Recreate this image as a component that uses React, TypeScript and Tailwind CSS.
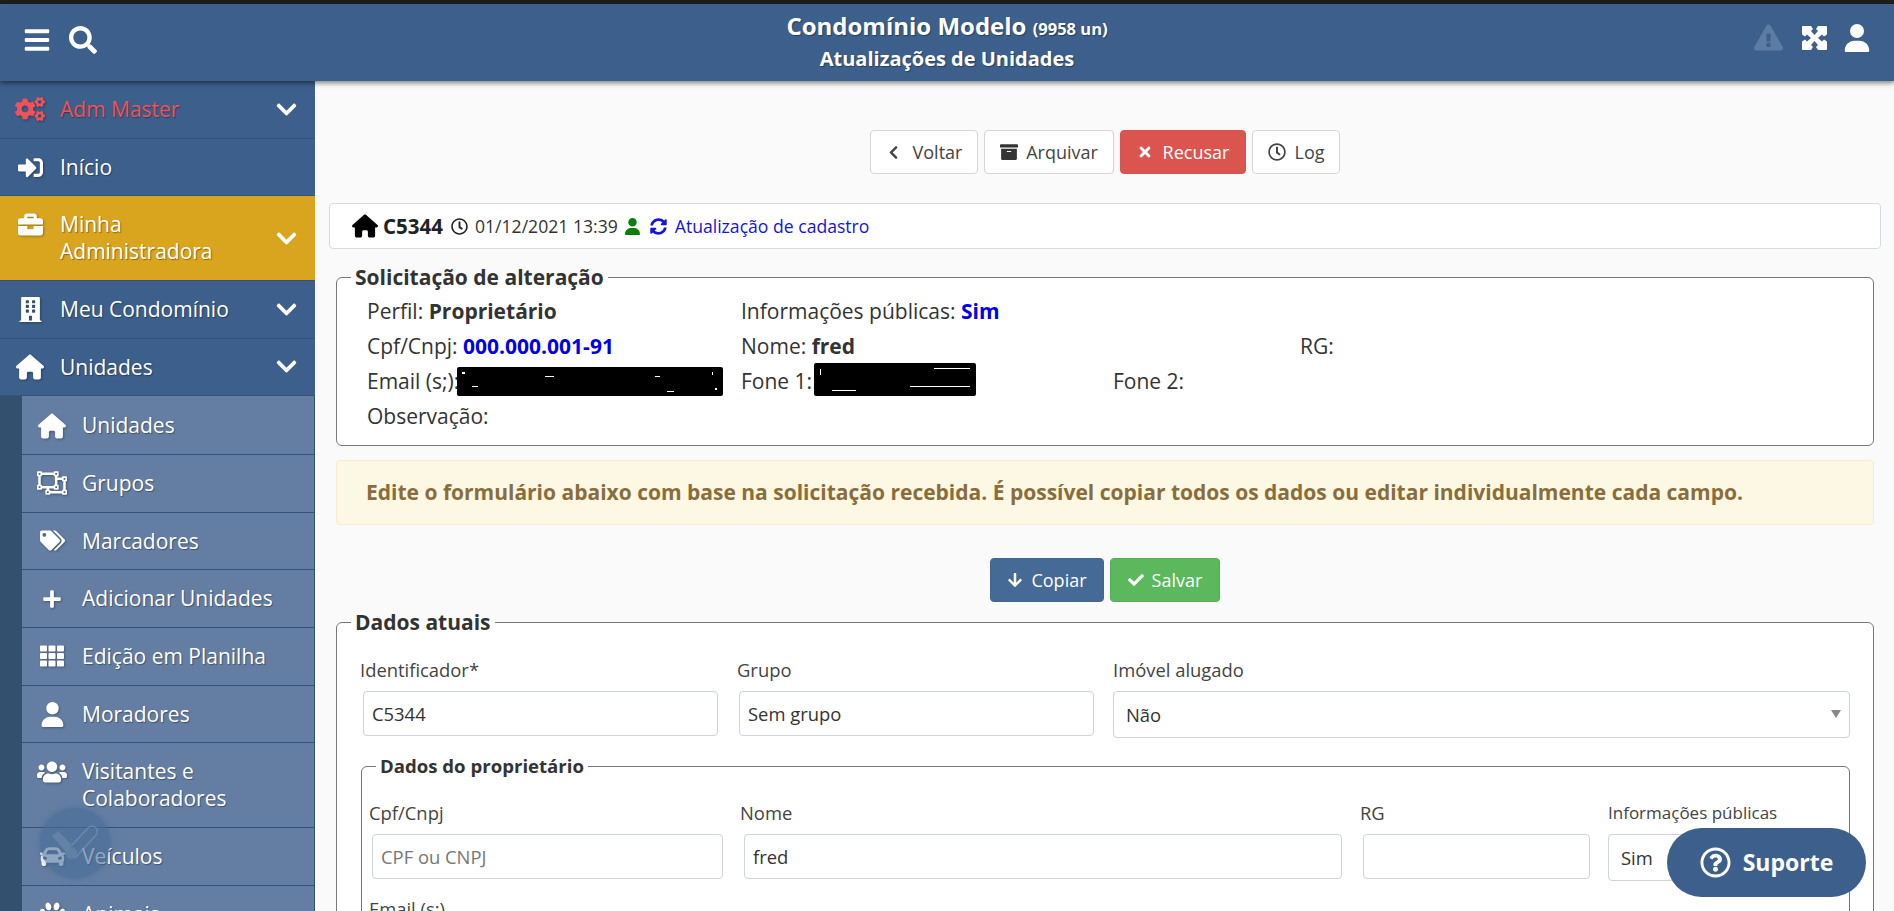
import React from "react";
import {
  FaArchive, FaArrowDown, FaBars, FaBriefcase, FaBuilding, FaCar, FaCheck, FaChevronDown, FaChevronLeft,
  FaCogs, FaExclamationTriangle, FaPaw, FaPlus, FaRegClock,
  FaRegObjectUngroup, FaRegQuestionCircle, FaSearch, FaSignInAlt, FaSyncAlt, FaTags, FaTh, FaTimes, FaUsers,
} from "react-icons/fa";
import { FaHouse, FaUser } from "react-icons/fa6";

const shadow = "[text-shadow:1px_1px_1px_rgba(0,0,0,0.35)]";
const iconBox = "flex h-[26.7px] w-[30px] shrink-0 items-center justify-center [filter:drop-shadow(1px_1px_1px_rgba(0,0,0,0.3))]";

type NavProps = {
  icon: React.ReactNode;
  label: React.ReactNode;
  chevron?: boolean;
  className?: string;
};

const NavItem = ({ icon, label, chevron, className }: NavProps) => (
  <div className={`flex items-start border-b border-[#34537c] py-[15px] pl-[15px] pr-[17px] ${className ?? ""}`}>
    <span className={iconBox}>{icon}</span>
    <span className={`ml-[15px] flex-1 ${shadow}`}>{label}</span>
    {chevron && <FaChevronDown className="my-auto shrink-0 text-[23px] text-white" />}
  </div>
);

const SubItem = ({ icon, label }: { icon: React.ReactNode; label: React.ReactNode }) => (
  <div className="flex items-start border-b border-[#34537c] py-[15px] pl-[15px]">
    <span className={iconBox}>{icon}</span>
    <span className={`ml-[15px] flex-1 ${shadow}`}>{label}</span>
  </div>
);

const Sidebar = () => (
  <aside className="relative w-[315px] shrink-0 overflow-hidden bg-[#3d5f8b] text-[21px] leading-[26.7px] text-white">
    <NavItem icon={<FaCogs className="text-[30px] text-[#f0525a]" />} label={<span className="text-[#f0525a]">Adm Master</span>} chevron />
    <NavItem icon={<FaSignInAlt className="text-[25px]" />} label="Início" />
    <NavItem icon={<FaBriefcase className="text-[25px]" />} label={<>Minha<br />Administradora</>} chevron className="bg-[#d9a51e]" />
    <NavItem icon={<FaBuilding className="text-[25px]" />} label="Meu Condomínio" chevron />
    <NavItem icon={<FaHouse className="text-[28px]" />} label="Unidades" chevron />
    <div className="bg-[#33506f] pl-[22px]">
      <div className="mr-px bg-[#647ea3] pt-px">
        <SubItem icon={<FaHouse className="text-[28px]" />} label="Unidades" />
        <SubItem icon={<FaRegObjectUngroup className="text-[30px]" />} label="Grupos" />
        <SubItem icon={<FaTags className="text-[25px]" />} label="Marcadores" />
        <SubItem icon={<FaPlus className="text-[20px]" />} label="Adicionar Unidades" />
        <SubItem icon={<FaTh className="text-[24px]" />} label="Edição em Planilha" />
        <SubItem icon={<FaUser className="text-[25px]" />} label="Moradores" />
        <SubItem icon={<FaUsers className="text-[30px]" />} label={<>Visitantes e<br />Colaboradores</>} />
        <SubItem icon={<FaCar className="text-[25px]" />} label="Veículos" />
        <SubItem icon={<FaPaw className="text-[25px]" />} label="Animais" />
      </div>
    </div>
    {/* bolinha flutuante do chat */}
    <div className="absolute left-[40px] top-[727px] h-[70px] w-[70px] rounded-full bg-[#466c97]/60 shadow-[0_0_6px_rgba(60,95,140,0.5)]">
      <svg viewBox="0 0 70 70" className="h-[70px] w-[70px]" fill="none">
        <path d="M12 28l6-5 14 14-6 7z" fill="#8ea5c0" opacity="0.3" />
        <path d="M32 37l16-17a5 5 0 0 1 8 7L35 50" stroke="#8ea5c0" strokeWidth="1.5" opacity="0.45" />
        <circle cx="31" cy="45" r="6" fill="#6f8aab" opacity="0.55" />
      </svg>
    </div>
  </aside>
);

const Btn = ({ children, className }: { children: React.ReactNode; className?: string }) => (
  <button className={`flex h-[44px] items-center justify-center gap-[8px] rounded-[4px] border text-[18px] ${className ?? ""}`}>
    {children}
  </button>
);

const Legend = ({ children, small }: { children: React.ReactNode; small?: boolean }) => (
  <legend className={`ml-[14px] px-[4px] font-bold leading-[26px] text-[#333] ${small ? "text-[18.6px]" : "text-[21px]"}`}>
    {children}
  </legend>
);

const inputBase = "block h-[45px] rounded-[4px] border border-[#ced4da] bg-white px-[8px] text-[18.4px] text-[#333] outline-none placeholder:text-[#777]";

type FieldProps = { label: string; value?: string; placeholder?: string; inputClass: string };

const Field = ({ label, value, placeholder, inputClass }: FieldProps) => (
  <div>
    <label className="mb-[9px] block text-[18.4px] leading-[24px] text-[#444]">{label}</label>
    <input readOnly value={value ?? ""} placeholder={placeholder} className={`${inputBase} ${inputClass}`} />
  </div>
);

const SelectField = ({ label, value, className, labelClass }: { label: string; value: string; className: string; labelClass?: string }) => (
  <div>
    <label className={`mb-[9px] block leading-[24px] text-[#444] ${labelClass ?? "text-[18.4px]"}`}>{label}</label>
    <div className={`relative ${className}`}>
      <select defaultValue={value} className={`${inputBase} h-[47px] w-full appearance-none pl-[12px]`}>
        <option>{value}</option>
      </select>
      <span className="absolute right-[9px] top-[19px] h-0 w-0 border-x-[5px] border-t-[8px] border-x-transparent border-t-[#888]" />
    </div>
  </div>
);

// marcas brancas que sobraram da tarja preta
const Speck = ({ className }: { className: string }) => <i className={`absolute bg-white ${className}`} />;

const ExpandIcon = () => (
  <svg viewBox="0 0 25 24" className="h-[24px] w-[25px]">
    <rect width="25" height="24" rx="1" fill="#fff" />
    <g fill="#3d5f8b">
      <path d="M9 0h7l-2 3 2 2-3.500 4L9 5l2-2z" />
      <path d="M9 24h7l-2-3 2-2-3.500-4L9 19l2 2z" />
      <path d="M0 8.500v7l3-2 2 2 4-3.500-4-3.500-2 2z" />
      <path d="M25 8.500v7l-3-2-2 2-4-3.500 4-3.500 2 2z" />
    </g>
  </svg>
);

const Main = () => (
  <main className="min-w-0 flex-1 overflow-hidden bg-[#fafafa] pl-[14px] pr-[13px] pt-[49px] text-[17.6px] text-[#333]">
    <div className="flex justify-center gap-[6px]">
      <Btn className="w-[108px] gap-[12px] border-[#d5d5d5] bg-white text-[#444]"><FaChevronLeft className="text-[15px]" />Voltar</Btn>
      <Btn className="w-[130px] border-[#d5d5d5] bg-white text-[#444]"><FaArchive className="text-[18px] text-[#333]" />Arquivar</Btn>
      <Btn className="w-[126px] gap-[10px] border-[#d9534f] bg-[#dc5450] text-white"><FaTimes className="text-[16px]" />Recusar</Btn>
      <Btn className="w-[88px] gap-[9px] border-[#d5d5d5] bg-white text-[#444]"><FaRegClock className="text-[18px]" />Log</Btn>
    </div>

    <div className="mt-[29px] flex h-[46px] items-center rounded-[4px] border border-[#d5dbe3] bg-white pl-[22px]">
      <FaHouse className="text-[26px] text-black" />
      <span className="ml-[5px] text-[20.5px] font-bold text-[#222]">C5344</span>
      <FaRegClock className="ml-[8px] text-[17px] text-[#222]" />
      <span className="ml-[7px]">01/12/2021 13:39</span>
      <FaUser className="ml-[6px] text-[17px] text-[#0a7f0a]" />
      <FaSyncAlt className="ml-[9px] text-[17px] text-[#1414e0]" />
      <span className="ml-[8px] text-[#1414e0]">Atualização de cadastro</span>
    </div>

    <fieldset className="mx-[7px] mt-[15px] rounded-[6px] border border-[#777] bg-white pb-[12px] pt-[3px]">
      <Legend>Solicitação de alteração</Legend>
      <div className="grid auto-rows-[35px] grid-cols-[374px_372px_187px_1fr] items-center pl-[30px] text-[21px] leading-[28px]">
        <div>Perfil: <b>Proprietário</b></div>
        <div className="col-span-3">Informações públicas: <b className="text-[#0000e6]">Sim</b></div>
        <div>Cpf/Cnpj: <b className="text-[#0000e6]">000.000.001-91</b></div>
        <div className="col-span-2">Nome: <b>fred</b></div>
        <div>RG:</div>
        <div className="relative">
          Email (s;):
          <span className="absolute left-[90px] top-[0px] h-[29px] w-[266px] rounded-[2px] bg-black">
            <Speck className="left-[5px] top-[5px] h-[2px] w-[3px]" />
            <Speck className="left-[15px] top-[19px] h-px w-[6px]" />
            <Speck className="left-[88px] top-[9px] h-px w-[9px]" />
            <Speck className="left-[198px] top-[9px] h-px w-[5px]" />
            <Speck className="left-[210px] top-[24px] h-px w-[7px]" />
            <Speck className="left-[255px] top-[5px] h-[3px] w-px" />
            <Speck className="left-[258px] top-[21px] h-[2px] w-[2px]" />
          </span>
        </div>
        <div className="relative">
          Fone 1:
          <span className="absolute left-[73px] top-[-4px] h-[33px] w-[162px] rounded-[2px] bg-black">
            <Speck className="left-[6px] top-[6px] h-[6px] w-px" />
            <Speck className="left-[18px] top-[27px] h-px w-[24px]" />
            <Speck className="left-[120px] top-[5px] h-px w-[36px]" />
            <Speck className="left-[96px] top-[23px] h-px w-[60px]" />
          </span>
        </div>
        <div className="col-span-2">Fone 2:</div>
        <div className="col-span-4">Observação:</div>
      </div>
    </fieldset>

    <div className="mx-[7px] mt-[14px] flex h-[65px] items-center rounded-[4px] border border-[#faebcc] bg-[#fcf8e3] pl-[29px] text-[21px] font-bold text-[#8a6d3b]">
      Edite o formulário abaixo com base na solicitação recebida. É possível copiar todos os dados ou editar individualmente cada campo.
    </div>

    <div className="mt-[33px] flex justify-center gap-[6px]">
      <Btn className="w-[114px] border-[#44658f] bg-[#466a96] text-white"><FaArrowDown className="text-[16px]" />Copiar</Btn>
      <Btn className="w-[110px] border-[#55b055] bg-[#5cb85c] text-white"><FaCheck className="text-[16px]" />Salvar</Btn>
    </div>

    <fieldset className="mx-[7px] mt-[7px] rounded-[6px] border border-[#777] bg-white pt-[23px]">
      <Legend>Dados atuais</Legend>
      <div className="px-[23px]">
        <div className="grid grid-cols-[377px_376px_1fr]">
          <Field label="Identificador*" value="C5344" inputClass="ml-[3px] w-[355px]" />
          <Field label="Grupo" value="Sem grupo" inputClass="ml-[2px] w-[355px]" />
          <SelectField label="Imóvel alugado" value="Não" className="w-[737px]" />
        </div>
        <fieldset className="ml-px mt-[15px] rounded-[6px] border border-[#777] pt-[22px]">
          <Legend small>Dados do proprietário</Legend>
          <div className="grid grid-cols-[371px_620px_248px_1fr] gap-y-[16px] pl-[7px]">
            <Field label="Cpf/Cnpj" placeholder="CPF ou CNPJ" inputClass="ml-[3px] w-[351px]" />
            <Field label="Nome" value="fred" inputClass="ml-[4px] w-[598px]" />
            <Field label="RG" inputClass="ml-[3px] w-[227px]" />
            <SelectField label="Informações públicas" value="Sim" className="w-[240px]" labelClass="text-[17px]" />
            <Field label="Email (s;)" inputClass="ml-[3px] w-[351px]" />
            <div />
            <div />
            <div />
          </div>
        </fieldset>
      </div>
    </fieldset>
  </main>
);

export default function App() {
  return (
    <div className="relative flex h-[911px] w-[1894px] flex-col overflow-hidden bg-[#fafafa] font-['Open_Sans',sans-serif]">
      <div className="h-[4px] shrink-0 bg-[#1e1e1e]" />
      <header className="relative z-10 flex h-[77px] shrink-0 items-center bg-[#3d5f8b] px-[23px] text-white shadow-[0_2px_5px_rgba(0,0,0,0.5)]">
        <div className="flex w-[300px] items-center gap-[18px] pb-[6px]">
          <FaBars className="text-[28px]" />
          <FaSearch className="text-[28px]" />
        </div>
        <div className={`flex-1 pr-[300px] text-center font-bold ${shadow}`}>
          <div className="text-[24px] leading-[30px]">
            Condomínio Modelo <span className="text-[16.5px]">(9958 un)</span>
          </div>
          <div className="text-[20px] leading-[30px]">Atualizações de Unidades</div>
        </div>
        <div className="absolute right-[23px] top-[19px] flex items-center">
          <FaExclamationTriangle className="text-[29px] text-[#5d7ca3]" />
          <span className="ml-[19px]"><ExpandIcon /></span>
          <FaUser className="ml-[16px] text-[28px]" />
        </div>
      </header>
      <div className="flex min-h-0 flex-1">
        <Sidebar />
        <Main />
      </div>
      <button className="absolute left-[1667px] top-[828px] z-20 flex h-[69px] w-[199px] items-center justify-center gap-[12px] rounded-[35px] bg-[#3d5f8b] text-[23px] font-bold text-white">
        <FaRegQuestionCircle className="text-[31px]" />
        Suporte
      </button>
    </div>
  );
}
